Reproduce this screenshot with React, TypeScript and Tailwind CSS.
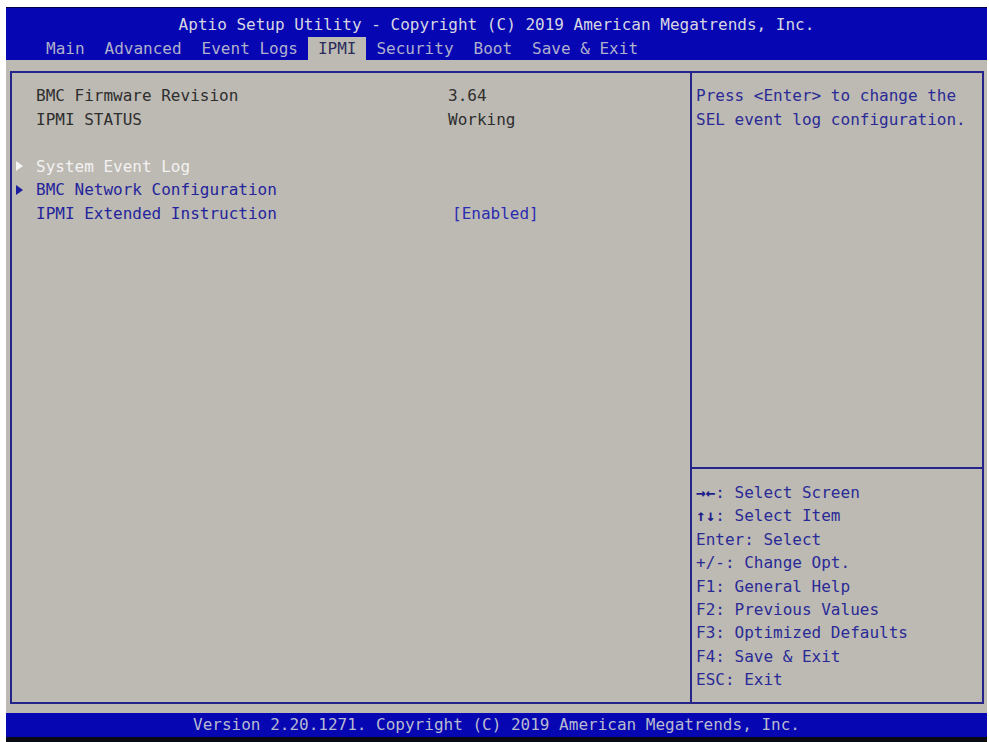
import React from 'react';

const Tri = ({ color }: { color: string }) => (
  <svg width="7" height="10" viewBox="0 0 7 10" className="block">
    <polygon points="0,0 7,5 0,10" fill={color} />
  </svg>
);

export default function App() {
  const menu = ['Main', 'Advanced', 'Event Logs', 'IPMI', 'Security', 'Boot', 'Save & Exit'];

  const rows = [
    { label: 'BMC Firmware Revision', value: '3.64', color: 'text-[#2e2e2e]', valColor: 'text-[#2e2e2e]' },
    { label: 'IPMI STATUS', value: 'Working', color: 'text-[#2e2e2e]', valColor: 'text-[#2e2e2e]' },
    { label: '', value: '' },
    { label: 'System Event Log', arrow: '#f4f4f4', color: 'text-[#f2f2f2]' },
    { label: 'BMC Network Configuration', arrow: '#1c1ca0', color: 'text-[#24249c]' },
    { label: 'IPMI Extended Instruction', value: '[Enabled]', color: 'text-[#24249c]', valColor: 'text-[#2c2cb0] ml-[4px]' },
  ];

  const legend = [
    { key: '→←', bold: true, text: ': Select Screen' },
    { key: '↑↓', bold: true, text: ': Select Item' },
    { key: 'Enter', text: ': Select' },
    { key: '+/-', text: ': Change Opt.' },
    { key: 'F1', text: ': General Help' },
    { key: 'F2', text: ': Previous Values' },
    { key: 'F3', text: ': Optimized Defaults' },
    { key: 'F4', text: ': Save & Exit' },
    { key: 'ESC', text: ': Exit' },
  ];

  return (
    <div className="w-[989px] h-[742px] bg-white pl-[6px] pr-[2px] pt-[7px] font-['DejaVu_Sans_Mono',monospace] text-[16px] whitespace-pre">
      <div className="flex flex-col h-full">
        {/* Header */}
        <div className="h-[53px] bg-[#0606b2] border-t border-[#00004a] flex flex-col">
          <div className="h-[29px] pt-[4px] flex items-center justify-center text-[#d6d6e2]">
            Aptio Setup Utility - Copyright (C) 2019 American Megatrends, Inc.
          </div>
          <div className="h-[23px] flex pl-[30px]">
            {menu.map((m) =>
              m === 'IPMI' ? (
                <span key={m} className="px-[10px] h-[23px] flex items-center bg-[#bdbab3] text-[#2c2c5c]">
                  {m}
                </span>
              ) : (
                <span key={m} className="px-[10px] h-[23px] flex items-center text-[#aeb0cc]">
                  {m}
                </span>
              )
            )}
          </div>
        </div>

        {/* Body */}
        <div className="flex-1 bg-[#bdbab3] pt-[11px] pb-[9px] pl-[4px] pr-[3px]">
          <div className="h-full border-2 border-[#24248a] flex">
            <div className="w-[680px] border-r-2 border-[#24248a] pt-[11px] leading-[23.5px]">
              {rows.map((r, i) => (
                <div key={i} className="flex h-[23.5px] items-center">
                  <div className="w-[24px] pl-[4px] flex items-center">
                    {r.arrow && <Tri color={r.arrow} />}
                  </div>
                  <div className={`w-[412px] ${r.color ?? ''}`}>{r.label}</div>
                  {r.value && <div className={r.valColor}>{r.value}</div>}
                </div>
              ))}
            </div>
            <div className="flex-1 flex flex-col">
              <div className="h-[394px] pl-[4px] pt-[11px] leading-[23.5px] text-[#2a2a96]">
                <div>Press &lt;Enter&gt; to change the</div>
                <div>SEL event log configuration.</div>
              </div>
              <div className="flex-1 border-t-2 border-[#24248a] pl-[4px] pt-[12px] leading-[23.4px] text-[#2a2a96]">
                {legend.map((l) => (
                  <div key={l.key}>
                    <span className={l.bold ? 'font-bold text-[#1c1c8c]' : ''}>{l.key}</span>
                    {l.text}
                  </div>
                ))}
              </div>
            </div>
          </div>
        </div>

        {/* Footer */}
        <div className="h-[24px] bg-[#0606b2] flex items-center justify-center text-[#b8bad0]">
          Version 2.20.1271. Copyright (C) 2019 American Megatrends, Inc.
        </div>
        <div className="h-[5px] bg-[#0a0a14]" />
      </div>
    </div>
  );
}
